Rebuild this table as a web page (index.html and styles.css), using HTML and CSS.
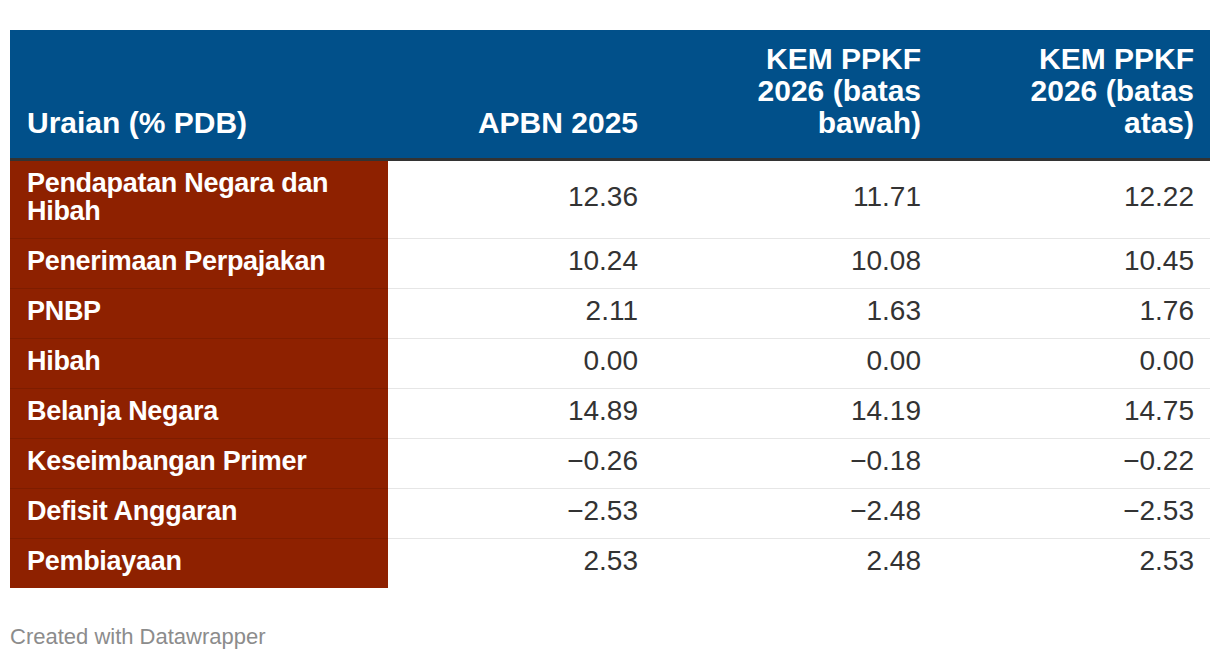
FILE: index.html
```html
<!DOCTYPE html>
<html lang="id">
<head>
<meta charset="utf-8">
<title>Tabel</title>
<link rel="stylesheet" href="styles.css">
</head>
<body>
<div class="chart">
  <table class="dw-table">
    <colgroup>
      <col class="c1"><col class="c2"><col class="c3"><col class="c4">
    </colgroup>
    <thead>
      <tr>
        <th class="left">Uraian (% PDB)</th>
        <th>APBN 2025</th>
        <th>KEM PPKF 2026 (batas bawah)</th>
        <th>KEM PPKF 2026 (batas atas)</th>
      </tr>
    </thead>
    <tbody>
      <tr class="tall"><td class="label">Pendapatan Negara dan Hibah</td><td>12.36</td><td>11.71</td><td>12.22</td></tr>
      <tr><td class="label">Penerimaan Perpajakan</td><td>10.24</td><td>10.08</td><td>10.45</td></tr>
      <tr><td class="label">PNBP</td><td>2.11</td><td>1.63</td><td>1.76</td></tr>
      <tr><td class="label">Hibah</td><td>0.00</td><td>0.00</td><td>0.00</td></tr>
      <tr><td class="label">Belanja Negara</td><td>14.89</td><td>14.19</td><td>14.75</td></tr>
      <tr><td class="label">Keseimbangan Primer</td><td>−0.26</td><td>−0.18</td><td>−0.22</td></tr>
      <tr><td class="label">Defisit Anggaran</td><td>−2.53</td><td>−2.48</td><td>−2.53</td></tr>
      <tr class="last"><td class="label">Pembiayaan</td><td>2.53</td><td>2.48</td><td>2.53</td></tr>
    </tbody>
  </table>
  <div class="footer">Created with Datawrapper</div>
</div>
</body>
</html>
```
FILE: styles.css
```css
html, body {
  margin: 0;
  padding: 0;
  background: #ffffff;
}
body {
  font-family: "Liberation Sans", Arial, Helvetica, sans-serif;
  color: #333333;
}
.chart {
  padding: 30px 10px 0 10px;
}
.dw-table {
  width: 1200px;
  border-collapse: collapse;
  table-layout: fixed;
  font-size: 28px;
}
.c1 { width: 378px; }
.c2 { width: 266px; }
.c3 { width: 283px; }
.c4 { width: 273px; }

.dw-table th {
  background: #01508a;
  color: #ffffff;
  font-weight: bold;
  font-size: 30px;
  text-align: right;
  vertical-align: bottom;
  line-height: 32px;
  padding: 13px 16px 19px 60px;
  border-bottom: 3px solid #333333;
}
.dw-table th.left {
  text-align: left;
  padding-left: 17px;
}
.dw-table td {
  text-align: right;
  padding: 0 16px 6px 16px;
  height: 43px;
  line-height: 28px;
  border-bottom: 1px solid #e6e6e6;
  vertical-align: middle;
}
.dw-table tr.tall td {
  height: 71px;
}
.dw-table tr.last td {
  border-bottom: none;
}
.dw-table td.label {
  text-align: left;
  padding-left: 17px;
  background: #8e2100;
  color: #ffffff;
  font-weight: bold;
  font-size: 27px;
  letter-spacing: -0.3px;
  border-bottom-color: #7e1d00;
}
.footer {
  margin-top: 36px;
  font-size: 22px;
  color: #8c8c8c;
}
```
